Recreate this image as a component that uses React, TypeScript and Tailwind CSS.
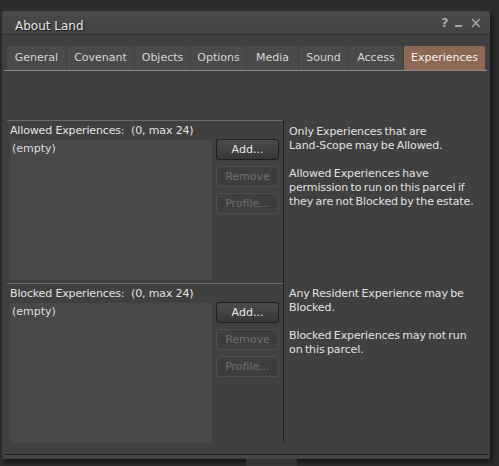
import React from "react";

const tabs = [
  { label: "General", w: "w-[59px]" },
  { label: "Covenant", w: "w-[67px]" },
  { label: "Objects", w: "w-[55px]" },
  { label: "Options", w: "w-[55px]" },
  { label: "Media", w: "w-[51px]" },
  { label: "Sound", w: "w-[49px]" },
  { label: "Access", w: "w-[54px]" },
  { label: "Experiences", w: "w-[81px]", active: true },
];

function Btn({ label, disabled }: { label: string; disabled?: boolean }) {
  return (
    <div
      className={`h-[21px] w-[63px] rounded-[3px] border flex items-center justify-center ${
        disabled
          ? "border-[#4e4e4e] bg-[#3e3e3e] text-[#6f6f6f]"
          : "border-[#1f1f1f] bg-gradient-to-b from-[#4c4c4c] to-[#363636] text-[#e8e8e8]"
      }`}
    >
      {label}
    </div>
  );
}

function Section({ title, first }: { title: string; first?: boolean }) {
  return (
    <div className={`flex flex-col border-t border-[#6a6a6a] ${first ? "h-[163px]" : "h-[160px]"}`}>
      <div className="h-[19px] pl-[3px] flex items-center text-[#e2e2e2] whitespace-pre tracking-[-0.15px]">{title}</div>
      <div className="flex pl-[3px] gap-[4px]">
        <div className="w-[202px] h-[140px] bg-[#484848] px-[2px] pt-[2px] text-[#dedede]">(empty)</div>
        <div className="flex flex-col gap-[6px] -mt-[1px]">
          <Btn label="Add..." />
          <Btn label="Remove" disabled />
          <Btn label="Profile..." disabled />
        </div>
      </div>
    </div>
  );
}

export default function App() {
  return (
    <div className="w-[499px] h-[466px] bg-[#2c2c2c] overflow-hidden font-['DejaVu_Sans',sans-serif] text-[11px] leading-[14px] pt-[11px] pl-[2px]">
      <div className="w-[488px] h-[448px] bg-[#404040] rounded-t-[3px] shadow-[3px_4px_4px_rgba(0,0,0,0.45)] flex flex-col">
        {/* title bar */}
        <div className="h-[24px] flex items-center px-[13px] pt-[6px] bg-gradient-to-b from-[#4a4a4a] to-[#434343] border-b border-[#2c2c2c] rounded-t-[3px]">
          <span className="text-[12px] text-[#e4e4e4] [text-shadow:1px_1px_1px_#1a1a1a] flex-1">About Land</span>
          <div className="flex items-center gap-[7px] text-[#a8a8a8] mr-[-5px] -mt-[6px]">
            <span className="text-[13px] font-bold">?</span>
            <span className="w-[7px] h-[2px] bg-[#a8a8a8] mt-[7px]" />
            <span className="text-[15px]">×</span>
          </div>
        </div>
        <div className="h-[11px]" />
        {/* tabs */}
        <div className="mx-[2px] pl-[3px] border-b border-[#888888] flex gap-[1px] mr-[3px]">
          {tabs.map((t) => (
            <div
              key={t.label}
              className={`${t.w} h-[24px] rounded-t-[2px] flex items-center justify-center ${
                t.active ? "bg-[#8c6855] text-[#f2f2f2]" : "bg-[#4a4a4a] text-[#d6d6d6]"
              }`}
            >
              {t.label}
            </div>
          ))}
        </div>
        {/* content */}
        <div className="flex pt-[49px] pl-[5px]">
          <div className="w-[276px] flex flex-col">
            <Section title="Allowed Experiences:  (0, max 24)" first />
            <Section title="Blocked Experiences:  (0, max 24)" />
          </div>
          <div className="border-l border-[#222222] h-[323px] pl-[5px] text-[#e0e0e0] flex flex-col tracking-[-0.1px] [word-spacing:-1px]">
            <div className="h-[163px] pt-[5px]">
              <p>Only Experiences that are</p>
              <p>Land-Scope may be Allowed.</p>
              <p>&nbsp;</p>
              <p>Allowed Experiences have</p>
              <p>permission to run on this parcel if</p>
              <p>they are not Blocked by the estate.</p>
            </div>
            <div className="pt-[4px]">
              <p>Any Resident Experience may be</p>
              <p>Blocked.</p>
              <p>&nbsp;</p>
              <p>Blocked Experiences may not run</p>
              <p>on this parcel.</p>
            </div>
          </div>
        </div>
        <div className="mt-[11px] mx-[2px] border-t border-[#1e1e1e] h-[4px] bg-[#464646]" />
      </div>
      <div className="ml-[244px] w-[51px] h-[7px] bg-[#343434]" />
    </div>
  );
}
